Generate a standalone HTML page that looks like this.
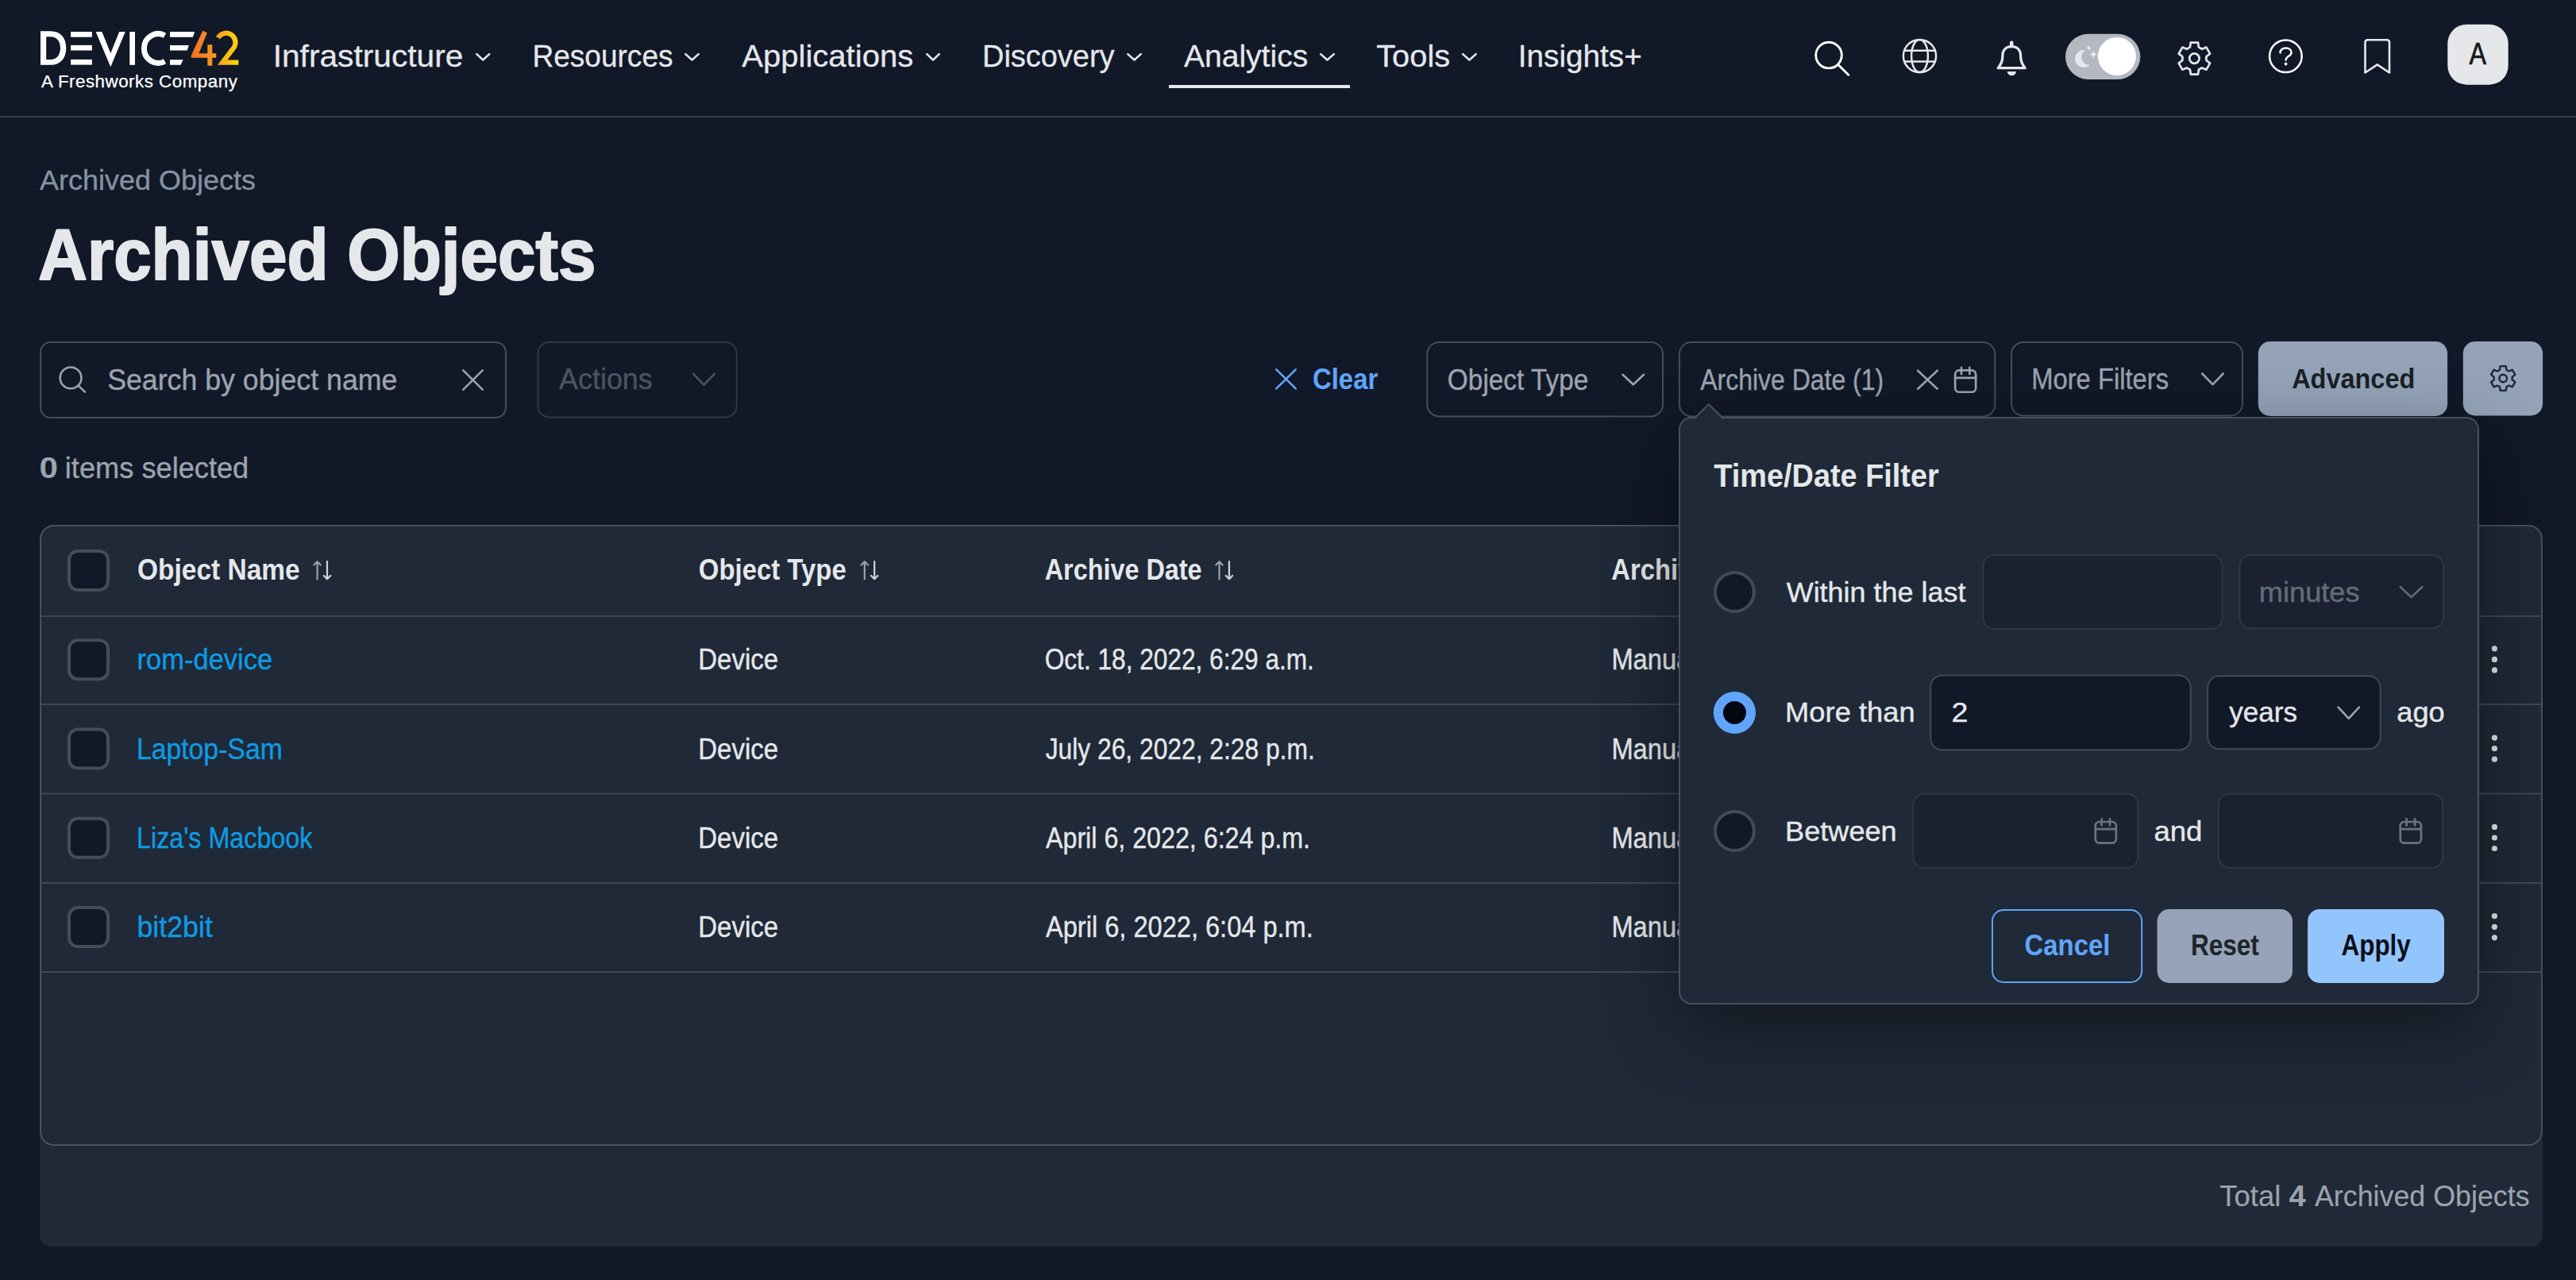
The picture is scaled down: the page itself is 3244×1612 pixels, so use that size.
<!DOCTYPE html>
<html><head><meta charset="utf-8"><style>
html,body{margin:0;padding:0;width:3244px;height:1612px;overflow:hidden;background:#111827;}
body{position:relative;font-family:"Liberation Sans",sans-serif;}
.t{position:absolute;white-space:nowrap;line-height:1;transform-origin:0 0;}
svg{position:absolute;left:0;top:0;font-family:"Liberation Sans",sans-serif;}
#pop{position:absolute;left:0;top:0;width:3244px;height:1612px;}
#popbox{position:absolute;left:2114px;top:525px;width:1008px;height:740px;box-sizing:border-box;border:2px solid #465060;border-radius:16px;background:#1f2937;box-shadow:0 30px 90px rgba(0,0,0,.42);}
</style></head><body>
<svg width="3244" height="1612"><rect x="0" y="146" width="3244" height="2" fill="#374151"/><rect x="1472" y="107" width="228" height="4" fill="#e5e7eb"/><polyline points="600.3,68.1 608.25,75.5 616.2,68.1" fill="none" stroke="#e5e7eb" stroke-width="2.6" stroke-linecap="round" stroke-linejoin="round"/><polyline points="863.3,68.1 871.5,75.5 879.7,68.1" fill="none" stroke="#e5e7eb" stroke-width="2.6" stroke-linecap="round" stroke-linejoin="round"/><polyline points="1167.3,68.1 1175,75.5 1182.7,68.1" fill="none" stroke="#e5e7eb" stroke-width="2.6" stroke-linecap="round" stroke-linejoin="round"/><polyline points="1420.3,68.1 1428.5,75.5 1436.7,68.1" fill="none" stroke="#e5e7eb" stroke-width="2.6" stroke-linecap="round" stroke-linejoin="round"/><polyline points="1663.2,68.1 1671.5,75.5 1679.8,68.1" fill="none" stroke="#e5e7eb" stroke-width="2.6" stroke-linecap="round" stroke-linejoin="round"/><polyline points="1842.1,68.1 1850.4,75.5 1858.7,68.1" fill="none" stroke="#e5e7eb" stroke-width="2.6" stroke-linecap="round" stroke-linejoin="round"/><defs><linearGradient id="g4" x1="0" x2="1" y1="0" y2="0"><stop offset="0" stop-color="#ee6f2a"/><stop offset="1" stop-color="#f79c1c"/></linearGradient><linearGradient id="g2" x1="0" x2="1" y1="0" y2="0"><stop offset="0" stop-color="#f7a51b"/><stop offset="1" stop-color="#fdd40a"/></linearGradient></defs><path fill="#fff" fill-rule="evenodd" d="M51,39.3H64C76.5,39.3 83.3,48 83.3,60.5C83.3,73 76.5,81.8 64,81.8H51Z M58.2,46.2H63.5C71.5,46.2 76,52 76,60.5C76,69 71.5,75.1 63.5,75.1H58.2Z"/><rect x="89.1" y="40" width="26.8" height="6.7" fill="#fff"/><rect x="89.1" y="56.9" width="26.8" height="6.6" fill="#fff"/><rect x="89.1" y="74.9" width="26.8" height="6.7" fill="#fff"/><polygon fill="#fff" points="120.6,40 128.4,40 139.3,67 150.2,40 157.8,40 139.3,84.2"/><rect x="163.3" y="40" width="6.7" height="41.8" fill="#fff"/><path d="M207.56,44.7A17.8,18.4 0 1 0 207.56,77.2" fill="none" stroke="#fff" stroke-width="7"/><polygon fill="#fff" points="214,40 245.3,40 242.8,46.7 214,46.7"/><polygon fill="#fff" points="214,57 237.9,57 235.8,63.5 214,63.5"/><polygon fill="#fff" points="214,75.2 230.6,75.2 227.6,81.7 214,81.7"/><polygon fill="url(#g4)" points="255.3,38.5 260.8,41.5 250.4,67.3 261.3,67.3 261.3,56.2 267.3,56.2 267.3,67.3 272.2,67.3 272.2,72.8 267.3,72.8 267.3,82.8 261.3,82.8 261.3,72.8 240.7,72.8 240.7,70"/><path d="M274.6,47.6A11.3,11.3 0 1 1 294.9,59.3L280.2,78.7H300.4" fill="none" stroke="url(#g2)" stroke-width="6.2" stroke-linejoin="miter"/><circle cx="2303" cy="69.6" r="16.3" fill="none" stroke="#fff" stroke-width="2.9"/><path d="M2314.6,81.2L2327.8,94.2" stroke="#fff" stroke-width="2.9" stroke-linecap="round"/><g fill="none" stroke="#e5e7eb" stroke-width="2.5"><circle cx="2417.5" cy="70.5" r="20.6"/><ellipse cx="2417.5" cy="70.5" rx="10.4" ry="20.6"/><path d="M2398.2,63.8H2436.8M2398.2,77.6H2436.8"/></g><path d="M2516.3,85.7H2550.1C2546.2,80.2 2544.6,77 2544.6,70.2C2544.6,62.6 2540,58.7 2533.2,58.7C2526.4,58.7 2521.9,62.6 2521.9,70.2C2521.9,77 2520.3,80.2 2516.3,85.7Z" fill="none" stroke="#e5e7eb" stroke-width="3.3" stroke-linejoin="round"/><path d="M2533.2,53.8V58" stroke="#e5e7eb" stroke-width="4.6" stroke-linecap="round"/><path d="M2527.8,90H2538.9A5.55,5.4 0 0 1 2527.8,90Z" fill="#e5e7eb"/><rect x="2601" y="42.8" width="94.3" height="57.1" rx="28.55" fill="#b4b8c0"/><circle cx="2665.9" cy="71" r="24.1" fill="#fff"/><path fill="#e6e8ec" d="M2626.24,63.23A10.9,10.9 0 1 0 2631.74,81.57A9.8,9.8 0 0 1 2626.24,63.23Z"/><path fill="#e6e8ec" d="M2630.3,56.8Q2630.85,59.85 2633.9,60.4Q2630.85,60.95 2630.3,64Q2629.75,60.95 2626.7,60.4Q2629.75,59.85 2630.3,56.8Z"/><path fill="#e6e8ec" d="M2636.3,63.2Q2637.05,67.85 2641.7,68.6Q2637.05,69.35 2636.3,74Q2635.55,69.35 2630.9,68.6Q2635.55,67.85 2636.3,63.2Z"/><path d="M2768.85,59.41 L2768.03,53.53 L2758.77,53.53 L2757.95,59.41 L2753.83,61.79 L2748.33,59.55 L2743.7,67.58 L2748.39,71.22 L2748.39,75.98 L2743.7,79.62 L2748.33,87.65 L2753.83,85.41 L2757.95,87.79 L2758.77,93.67 L2768.03,93.67 L2768.85,87.79 L2772.97,85.41 L2778.47,87.65 L2783.1,79.62 L2778.41,75.98 L2778.41,71.22 L2783.1,67.58 L2778.47,59.55 L2772.97,61.79Z" fill="none" stroke="#e5e7eb" stroke-width="2.7" stroke-linejoin="round"/><circle cx="2763.4" cy="73.6" r="6.2" fill="none" stroke="#e5e7eb" stroke-width="2.7"/><circle cx="2878.4" cy="70.7" r="20.3" fill="none" stroke="#fff" stroke-width="2.5"/><path d="M2871.6,66.4C2871.2,62.8 2874.4,60.6 2878.6,60.6C2882.8,60.6 2885.6,63.1 2885.6,66.2C2885.6,70.6 2878.6,71 2878.6,75.6" fill="none" stroke="#fff" stroke-width="2.5" stroke-linecap="round"/><circle cx="2878.6" cy="80.5" r="1.9" fill="#fff"/><path d="M2978.5,91.5V53.5Q2978.5,50.3 2981.7,50.3H3005.8Q3009,50.3 3009,53.5V91.5L2993.75,81.3Z" fill="none" stroke="#e5e7eb" stroke-width="2.6" stroke-linejoin="round"/><rect x="3082.3" y="30.7" width="76.4" height="76" rx="24" fill="#e5e7eb"/><rect x="51" y="431" width="586" height="95" rx="13" fill="none" stroke="#464e5a" stroke-width="2"/><circle cx="89.1" cy="475.9" r="13.4" fill="none" stroke="#9ca3af" stroke-width="2.6"/><path d="M98.8,485.6L107,493.6" stroke="#9ca3af" stroke-width="2.6" stroke-linecap="round"/><path d="M583.3,466.3L607.7,490.7M607.7,466.3L583.3,490.7" stroke="#9ca3af" stroke-width="2.6" stroke-linecap="round" fill="none"/><rect x="677.4" y="431" width="250.3" height="94.4" rx="14" fill="none" stroke="#2f3846" stroke-width="2"/><polyline points="873.2,470.8 886.45,484.7 899.7,470.8" fill="none" stroke="#4b5360" stroke-width="2.6" stroke-linecap="round" stroke-linejoin="round"/><path d="M1607.3,465.3L1631.7,489.4M1631.7,465.3L1607.3,489.4" stroke="#60a5fa" stroke-width="2.6" stroke-linecap="round" fill="none"/><rect x="1797.3" y="431" width="296.7" height="93.4" rx="15" fill="none" stroke="#464e5a" stroke-width="2"/><polyline points="2043.5,471.8 2056.8,484.3 2070.1,471.8" fill="none" stroke="#9ca3af" stroke-width="2.6" stroke-linecap="round" stroke-linejoin="round"/><rect x="2115" y="431" width="397.3" height="93.4" rx="15" fill="none" stroke="#464e5a" stroke-width="2"/><path d="M2415.1,466.7L2439.7,489.7M2439.7,466.7L2415.1,489.7" stroke="#9ca3af" stroke-width="2.6" stroke-linecap="round" fill="none"/><rect x="2462.15" y="466.46" width="26" height="27.29" rx="5" fill="none" stroke="#9ca3af" stroke-width="2.7"/><path d="M2469.98,462.75V471.11M2480.32,462.75V471.11M2462.15,475.9H2488.15" stroke="#9ca3af" stroke-width="2.7" stroke-linecap="round" fill="none"/><rect x="2533" y="431" width="291" height="92.5" rx="15" fill="none" stroke="#464e5a" stroke-width="2"/><polyline points="2773.3,470.5 2786.5,484.2 2799.7,470.5" fill="none" stroke="#9ca3af" stroke-width="2.6" stroke-linecap="round" stroke-linejoin="round"/><rect x="2843.8" y="430" width="238.3" height="94" rx="15" fill="#94a3b8"/><rect x="3101.8" y="430" width="100.3" height="93.5" rx="15" fill="#94a3b8"/><path d="M3156.36,465.67 L3155.75,461.1 L3148.65,461.1 L3148.04,465.67 L3144.9,467.49 L3140.64,465.72 L3137.09,471.88 L3140.74,474.69 L3140.74,478.31 L3137.09,481.12 L3140.64,487.28 L3144.9,485.51 L3148.04,487.33 L3148.65,491.9 L3155.75,491.9 L3156.36,487.33 L3159.5,485.51 L3163.76,487.28 L3167.31,481.12 L3163.66,478.31 L3163.66,474.69 L3167.31,471.88 L3163.76,465.72 L3159.5,467.49Z" fill="none" stroke="#1f2937" stroke-width="2.4" stroke-linejoin="round"/><circle cx="3152.2" cy="476.5" r="4.8" fill="none" stroke="#1f2937" stroke-width="2.4"/><path fill="#1f2937" d="M67,661H3185A17,17 0 0 1 3202,678V1556A14,14 0 0 1 3188,1570H64A14,14 0 0 1 50,1556V678A17,17 0 0 1 67,661Z"/><rect x="51" y="662" width="3150" height="780" rx="17" fill="none" stroke="#465060" stroke-width="2"/><rect x="52" y="775" width="3148" height="2" fill="#3f4855"/><rect x="52" y="886" width="3148" height="2" fill="#3f4855"/><rect x="52" y="998.5" width="3148" height="2" fill="#3f4855"/><rect x="52" y="1111" width="3148" height="2" fill="#3f4855"/><rect x="52" y="1223" width="3148" height="2" fill="#3f4855"/><rect x="87" y="693.9" width="49" height="49" rx="11" fill="#111827" stroke="#444c59" stroke-width="4"/><rect x="87" y="806.2" width="49" height="49" rx="11" fill="#111827" stroke="#444c59" stroke-width="4"/><rect x="87" y="918.5" width="49" height="49" rx="11" fill="#111827" stroke="#444c59" stroke-width="4"/><rect x="87" y="1030.8" width="49" height="49" rx="11" fill="#111827" stroke="#444c59" stroke-width="4"/><rect x="87" y="1143.1" width="49" height="49" rx="11" fill="#111827" stroke="#444c59" stroke-width="4"/><path d="M399.6,707.5V729.5M395.4,711.5L399.6,707.2L403.8,711.5" stroke="#9ca3af" stroke-width="2.2" fill="none" stroke-linecap="round" stroke-linejoin="round"/><path d="M412,707V729M407.8,725L412,729.3L416.2,725" stroke="#d1d5db" stroke-width="2.2" fill="none" stroke-linecap="round" stroke-linejoin="round"/><path d="M1088.8,707.5V729.5M1084.6,711.5L1088.8,707.2L1093,711.5" stroke="#9ca3af" stroke-width="2.2" fill="none" stroke-linecap="round" stroke-linejoin="round"/><path d="M1101.2,707V729M1097,725L1101.2,729.3L1105.4,725" stroke="#d1d5db" stroke-width="2.2" fill="none" stroke-linecap="round" stroke-linejoin="round"/><path d="M1535.5,707.5V729.5M1531.3,711.5L1535.5,707.2L1539.7,711.5" stroke="#9ca3af" stroke-width="2.2" fill="none" stroke-linecap="round" stroke-linejoin="round"/><path d="M1547.9,707V729M1543.7,725L1547.9,729.3L1552.1,725" stroke="#d1d5db" stroke-width="2.2" fill="none" stroke-linecap="round" stroke-linejoin="round"/><circle cx="3141.4" cy="816.8" r="3.6" fill="#e5e7eb"/><circle cx="3141.4" cy="830.4" r="3.6" fill="#e5e7eb"/><circle cx="3141.4" cy="843.9" r="3.6" fill="#e5e7eb"/><circle cx="3141.4" cy="929.1" r="3.6" fill="#e5e7eb"/><circle cx="3141.4" cy="942.7" r="3.6" fill="#e5e7eb"/><circle cx="3141.4" cy="956.2" r="3.6" fill="#e5e7eb"/><circle cx="3141.4" cy="1041.4" r="3.6" fill="#e5e7eb"/><circle cx="3141.4" cy="1055" r="3.6" fill="#e5e7eb"/><circle cx="3141.4" cy="1068.5" r="3.6" fill="#e5e7eb"/><circle cx="3141.4" cy="1153.7" r="3.6" fill="#e5e7eb"/><circle cx="3141.4" cy="1167.3" r="3.6" fill="#e5e7eb"/><circle cx="3141.4" cy="1180.8" r="3.6" fill="#e5e7eb"/><text transform="translate(52.00,110.40) scale(1.0000,1)" font-size="22.38" font-weight="400" fill="#ffffff" stroke="#ffffff" stroke-width="0.25" stroke-linejoin="round" letter-spacing="0.49">A Freshworks Company</text><text transform="translate(343.64,84.20) scale(1.0260,1)" font-size="39.68" font-weight="400" fill="#e5e7eb" stroke="#e5e7eb" stroke-width="0.3" stroke-linejoin="round">Infrastructure</text><text transform="translate(670.43,84.20) scale(0.9342,1)" font-size="39.68" font-weight="400" fill="#e5e7eb" stroke="#e5e7eb" stroke-width="0.3" stroke-linejoin="round">Resources</text><text transform="translate(934.30,84.20) scale(1.0091,1)" font-size="39.68" font-weight="400" fill="#e5e7eb" stroke="#e5e7eb" stroke-width="0.3" stroke-linejoin="round">Applications</text><text transform="translate(1237.06,84.20) scale(0.9561,1)" font-size="39.68" font-weight="400" fill="#e5e7eb" stroke="#e5e7eb" stroke-width="0.3" stroke-linejoin="round">Discovery</text><text transform="translate(1490.90,84.20) scale(0.9848,1)" font-size="39.68" font-weight="400" fill="#e5e7eb" stroke="#e5e7eb" stroke-width="0.3" stroke-linejoin="round">Analytics</text><text transform="translate(1733.20,84.20) scale(1.0039,1)" font-size="39.68" font-weight="400" fill="#e5e7eb" stroke="#e5e7eb" stroke-width="0.3" stroke-linejoin="round">Tools</text><text transform="translate(1911.81,84.20) scale(0.9760,1)" font-size="39.68" font-weight="400" fill="#e5e7eb" stroke="#e5e7eb" stroke-width="0.3" stroke-linejoin="round">Insights+</text><text transform="translate(3109.40,80.90) scale(0.8154,1)" font-size="39.54" font-weight="400" fill="#18181b" stroke="#18181b" stroke-width="0.7" stroke-linejoin="round">A</text><text transform="translate(50.10,238.60) scale(1.0188,1)" font-size="35.32" font-weight="400" fill="#8593a0" stroke="#8593a0" stroke-width="0.35" stroke-linejoin="round">Archived Objects</text><text transform="translate(48.29,352.20) scale(0.9322,1)" font-size="91.57" font-weight="700" fill="#e5e7eb" stroke="#e5e7eb" stroke-width="2.2" stroke-linejoin="round">Archived Objects</text><text transform="translate(135.17,491.20) scale(0.9675,1)" font-size="36.92" font-weight="400" fill="#9ca3af" stroke="#9ca3af" stroke-width="0.4" stroke-linejoin="round">Search by object name</text><text transform="translate(704.00,490.30) scale(0.9775,1)" font-size="36.77" font-weight="400" fill="#4b5360" stroke="#4b5360" stroke-width="0.4" stroke-linejoin="round">Actions</text><text transform="translate(49.43,602.30) scale(1.1488,1)" font-size="36.77" font-weight="700" fill="#9ca3af">0</text><text transform="translate(81.83,602.00) scale(0.9850,1)" font-size="36.77" font-weight="400" fill="#9ca3af" stroke="#9ca3af" stroke-width="0.4" stroke-linejoin="round">items selected</text><text transform="translate(1652.88,489.80) scale(0.9104,1)" font-size="36.19" font-weight="700" fill="#60a5fa">Clear</text><text transform="translate(1822.86,490.70) scale(0.9079,1)" font-size="36.77" font-weight="400" fill="#9ca3af" stroke="#9ca3af" stroke-width="0.4" stroke-linejoin="round">Object Type</text><text transform="translate(2141.30,490.70) scale(0.8687,1)" font-size="36.77" font-weight="400" fill="#9ca3af" stroke="#9ca3af" stroke-width="0.4" stroke-linejoin="round">Archive Date (1)</text><text transform="translate(2558.18,490.00) scale(0.9020,1)" font-size="36.34" font-weight="400" fill="#9ca3af" stroke="#9ca3af" stroke-width="0.4" stroke-linejoin="round">More Filters</text><text transform="translate(2886.15,489.00) scale(0.9083,1)" font-size="35.76" font-weight="700" fill="#1a1f26">Advanced</text><text transform="translate(173.06,730.30) scale(0.9106,1)" font-size="36.77" font-weight="700" fill="#e5e7eb">Object Name</text><text transform="translate(879.78,730.30) scale(0.8957,1)" font-size="36.77" font-weight="700" fill="#e5e7eb">Object Type</text><text transform="translate(1315.75,730.30) scale(0.8802,1)" font-size="36.77" font-weight="700" fill="#e5e7eb">Archive Date</text><text transform="translate(2029.35,730.30) scale(0.8900,1)" font-size="36.77" font-weight="700" fill="#e5e7eb">Archive Type</text><text transform="translate(172.53,843.30) scale(0.9499,1)" font-size="36.34" font-weight="400" fill="#0e9be3" stroke="#0e9be3" stroke-width="0.4" stroke-linejoin="round">rom-device</text><text transform="translate(879.26,843.30) scale(0.9087,1)" font-size="36.34" font-weight="400" fill="#e5e7eb" stroke="#e5e7eb" stroke-width="0.4" stroke-linejoin="round">Device</text><text transform="translate(1315.73,843.30) scale(0.8704,1)" font-size="36.34" font-weight="400" fill="#e5e7eb" stroke="#e5e7eb" stroke-width="0.4" stroke-linejoin="round">Oct. 18, 2022, 6:29 a.m.</text><text transform="translate(2029.38,843.30) scale(0.9000,1)" font-size="36.34" font-weight="400" fill="#e5e7eb" stroke="#e5e7eb" stroke-width="0.4" stroke-linejoin="round">Manual</text><text transform="translate(171.90,955.60) scale(0.9291,1)" font-size="36.34" font-weight="400" fill="#0e9be3" stroke="#0e9be3" stroke-width="0.4" stroke-linejoin="round">Laptop-Sam</text><text transform="translate(879.26,955.60) scale(0.9087,1)" font-size="36.34" font-weight="400" fill="#e5e7eb" stroke="#e5e7eb" stroke-width="0.4" stroke-linejoin="round">Device</text><text transform="translate(1316.68,955.60) scale(0.8743,1)" font-size="36.34" font-weight="400" fill="#e5e7eb" stroke="#e5e7eb" stroke-width="0.4" stroke-linejoin="round">July 26, 2022, 2:28 p.m.</text><text transform="translate(2029.38,955.60) scale(0.9000,1)" font-size="36.34" font-weight="400" fill="#e5e7eb" stroke="#e5e7eb" stroke-width="0.4" stroke-linejoin="round">Manual</text><text transform="translate(172.02,1067.90) scale(0.8879,1)" font-size="36.34" font-weight="400" fill="#0e9be3" stroke="#0e9be3" stroke-width="0.4" stroke-linejoin="round">Liza&#39;s Macbook</text><text transform="translate(879.26,1067.90) scale(0.9087,1)" font-size="36.34" font-weight="400" fill="#e5e7eb" stroke="#e5e7eb" stroke-width="0.4" stroke-linejoin="round">Device</text><text transform="translate(1317.00,1067.90) scale(0.8867,1)" font-size="36.34" font-weight="400" fill="#e5e7eb" stroke="#e5e7eb" stroke-width="0.4" stroke-linejoin="round">April 6, 2022, 6:24 p.m.</text><text transform="translate(2029.38,1067.90) scale(0.9000,1)" font-size="36.34" font-weight="400" fill="#e5e7eb" stroke="#e5e7eb" stroke-width="0.4" stroke-linejoin="round">Manual</text><text transform="translate(172.46,1180.20) scale(0.9835,1)" font-size="36.34" font-weight="400" fill="#0e9be3" stroke="#0e9be3" stroke-width="0.4" stroke-linejoin="round">bit2bit</text><text transform="translate(879.26,1180.20) scale(0.9087,1)" font-size="36.34" font-weight="400" fill="#e5e7eb" stroke="#e5e7eb" stroke-width="0.4" stroke-linejoin="round">Device</text><text transform="translate(1317.00,1180.20) scale(0.8966,1)" font-size="36.34" font-weight="400" fill="#e5e7eb" stroke="#e5e7eb" stroke-width="0.4" stroke-linejoin="round">April 6, 2022, 6:04 p.m.</text><text transform="translate(2029.38,1180.20) scale(0.9000,1)" font-size="36.34" font-weight="400" fill="#e5e7eb" stroke="#e5e7eb" stroke-width="0.4" stroke-linejoin="round">Manual</text><text transform="translate(2795.27,1519.00) scale(0.9758,1)" font-size="37.36" font-weight="400" fill="#9ca3af" stroke="#9ca3af" stroke-width="0.15" stroke-linejoin="round">Total</text><text transform="translate(2882.62,1519.00) scale(1.0221,1)" font-size="37.36" font-weight="700" fill="#9ca3af">4</text><text transform="translate(2915.00,1519.00) scale(0.9583,1)" font-size="37.36" font-weight="400" fill="#9ca3af" stroke="#9ca3af" stroke-width="0.15" stroke-linejoin="round">Archived Objects</text></svg>
<div id="pop"><div id="popbox"></div>
<svg width="3244" height="1612"><polygon points="2133.5,527.5 2151.8,509.5 2170,527.5" fill="#1f2937"/><path d="M2133.5,527.2L2151.8,508.9L2170,527.2" fill="none" stroke="#465060" stroke-width="2"/><rect x="2137.3" y="525.2" width="29" height="3.5" fill="#1f2937"/><circle cx="2184.35" cy="745.5" r="24.5" fill="#111827" stroke="#414b58" stroke-width="4"/><rect x="2497.4" y="699" width="301.2" height="93.1" rx="14" fill="#1b2130" stroke="#2e3843" stroke-width="2"/><rect x="2820.4" y="699" width="256.6" height="92.4" rx="14" fill="#1b2130" stroke="#2e3843" stroke-width="2"/><polyline points="3022.8,739.1 3036.55,752.1 3050.3,739.1" fill="none" stroke="#646c78" stroke-width="2.6" stroke-linecap="round" stroke-linejoin="round"/><circle cx="2184.4" cy="897.5" r="26.6" fill="#60a5fa"/><circle cx="2184.4" cy="897.5" r="14.5" fill="#030712"/><rect x="2431.2" y="850.4" width="327.5" height="94.2" rx="15" fill="#111827" stroke="#414956" stroke-width="2"/><rect x="2780.2" y="851.2" width="217.5" height="92.1" rx="15" fill="#111827" stroke="#414956" stroke-width="2"/><polyline points="2944.6,890.7 2957.75,904.9 2970.9,890.7" fill="none" stroke="#9ca3af" stroke-width="2.6" stroke-linecap="round" stroke-linejoin="round"/><circle cx="2184.4" cy="1046.5" r="24.5" fill="#111827" stroke="#414b58" stroke-width="4"/><rect x="2409.3" y="999.5" width="283.2" height="93.5" rx="14" fill="#1b2130" stroke="#2e3843" stroke-width="2"/><rect x="2638.75" y="1034.98" width="26.1" height="26.67" rx="5" fill="none" stroke="#6b7280" stroke-width="2.7"/><path d="M2646.62,1031.35V1039.5M2656.98,1031.35V1039.5M2638.75,1044.2H2664.85" stroke="#6b7280" stroke-width="2.7" stroke-linecap="round" fill="none"/><rect x="2793.7" y="999.5" width="282.3" height="93.5" rx="14" fill="#1b2130" stroke="#2e3843" stroke-width="2"/><rect x="3022.75" y="1034.98" width="26.2" height="26.67" rx="5" fill="none" stroke="#6b7280" stroke-width="2.7"/><path d="M3030.65,1031.35V1039.5M3041.05,1031.35V1039.5M3022.75,1044.2H3048.95" stroke="#6b7280" stroke-width="2.7" stroke-linecap="round" fill="none"/><rect x="2509" y="1146" width="188.2" height="91" rx="14" fill="none" stroke="#60a5fa" stroke-width="2"/><rect x="2716.6" y="1145" width="170.4" height="93" rx="15" fill="#96a3b8"/><rect x="2906.1" y="1145" width="171.9" height="93" rx="15" fill="#93c5fd"/><text transform="translate(2158.37,613.40) scale(0.9307,1)" font-size="40.70" font-weight="700" fill="#e5e7eb">Time/Date Filter</text><text transform="translate(2249.70,757.80) scale(1.0139,1)" font-size="35.47" font-weight="400" fill="#e5e7eb" stroke="#e5e7eb" stroke-width="0.4" stroke-linejoin="round">Within the last</text><text transform="translate(2844.83,758.20) scale(1.0207,1)" font-size="35.47" font-weight="400" fill="#646c78" stroke="#646c78" stroke-width="0.4" stroke-linejoin="round">minutes</text><text transform="translate(2248.09,909.00) scale(1.0242,1)" font-size="35.47" font-weight="400" fill="#e5e7eb" stroke="#e5e7eb" stroke-width="0.4" stroke-linejoin="round">More than</text><text transform="translate(2457.42,909.00) scale(1.0604,1)" font-size="35.47" font-weight="400" fill="#e5e7eb" stroke="#e5e7eb" stroke-width="0.4" stroke-linejoin="round">2</text><text transform="translate(2807.30,908.60) scale(0.9888,1)" font-size="35.47" font-weight="400" fill="#e5e7eb" stroke="#e5e7eb" stroke-width="0.4" stroke-linejoin="round">years</text><text transform="translate(3018.35,908.60) scale(1.0200,1)" font-size="35.47" font-weight="400" fill="#e5e7eb" stroke="#e5e7eb" stroke-width="0.4" stroke-linejoin="round">ago</text><text transform="translate(2248.11,1059.10) scale(1.0188,1)" font-size="35.47" font-weight="400" fill="#e5e7eb" stroke="#e5e7eb" stroke-width="0.4" stroke-linejoin="round">Between</text><text transform="translate(2712.44,1059.10) scale(1.0312,1)" font-size="35.47" font-weight="400" fill="#e5e7eb" stroke="#e5e7eb" stroke-width="0.4" stroke-linejoin="round">and</text><text transform="translate(2549.58,1203.30) scale(0.9087,1)" font-size="36.19" font-weight="700" fill="#60a5fa">Cancel</text><text transform="translate(2758.91,1203.30) scale(0.8723,1)" font-size="36.19" font-weight="700" fill="#1f242b">Reset</text><text transform="translate(2948.47,1203.30) scale(0.8694,1)" font-size="36.19" font-weight="700" fill="#0b0f19">Apply</text></svg>
</div>
</body></html>
